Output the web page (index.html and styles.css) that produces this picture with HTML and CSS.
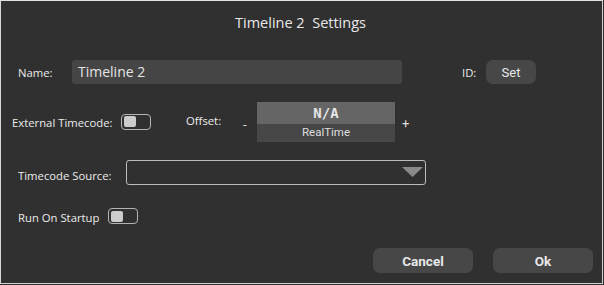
FILE: index.html
```html
<!DOCTYPE html>
<html>
<head>
<meta charset="utf-8">
<link rel="stylesheet" href="styles.css">
</head>
<body>
<div class="dialog">
  <div class="title">Timeline 2&nbsp;&nbsp;Settings</div>

  <div class="row row-name">
    <span class="label lbl-name">Name:</span>
    <div class="text-input">Timeline 2</div>
    <span class="label lbl-id">ID:</span>
    <button class="btn btn-set">Set</button>
  </div>

  <div class="row row-ext">
    <span class="label lbl-ext">External Timecode:</span>
    <span class="toggle toggle-ext"><span class="knob"></span></span>
    <span class="label lbl-offset">Offset:</span>
    <span class="pm minus">-</span>
    <div class="offset-box">
      <div class="offset-top">N/A</div>
      <div class="offset-bottom">RealTime</div>
    </div>
    <span class="pm plus">+</span>
  </div>

  <div class="row row-src">
    <span class="label lbl-src">Timecode Source:</span>
    <div class="dropdown">
      <svg class="caret" width="21" height="10" viewBox="0 0 21 10"><polygon points="0,0 21,0 10.5,10" fill="#8a8a8a"/></svg>
    </div>
  </div>

  <div class="row row-run">
    <span class="label lbl-run">Run On Startup</span>
    <span class="toggle toggle-run"><span class="knob"></span></span>
  </div>

  <div class="row row-buttons">
    <button class="btn btn-big">Cancel</button>
    <button class="btn btn-big">Ok</button>
  </div>
</div>
</body>
</html>
```

FILE: styles.css
```css
html, body {
  margin: 0;
  padding: 0;
  background: #303030;
}

.dialog {
  box-sizing: border-box;
  width: 603px;
  height: 284px;
  border: 1px solid #cfcfcf;
  border-top-color: #e0e0e0;
  border-left-color: #d6d6d6;
  background: #303030;
  font-family: "Open Sans", "Noto Sans", sans-serif;
  color: #e6e6e6;
}

.title {
  height: 43px;
  line-height: 43px;
  text-align: center;
  font-size: 14.5px;
  color: #e8e8e8;
  padding-right: 2px;
}

.row {
  display: flex;
  align-items: center;
}

.label {
  font-size: 11.3px;
  color: #ececec;
  white-space: nowrap;
}

/* Row 1 */
.row-name {
  margin-top: 16px;
  height: 24px;
}
.lbl-name { margin-left: 17px; width: 54px; }
.text-input {
  box-sizing: border-box;
  width: 330px;
  height: 24px;
  background: #454545;
  border-radius: 3px;
  padding-left: 6px;
  font-size: 14px;
  line-height: 24px;
  color: #e4e4e4;
}
.lbl-id { margin-left: 60px; width: 24px; }

.btn {
  border: none;
  background: #474747;
  color: #e8e8e8;
  font-family: Roboto, "Liberation Sans", sans-serif;
  border-radius: 7px;
  padding: 0;
  cursor: default;
}
.btn-set {
  width: 50px;
  height: 24px;
  font-size: 13px;
}

/* Row 2 */
.row-ext {
  margin-top: 18px;
  height: 40px;
}
.lbl-ext { margin-left: 11px; width: 109px; }
.toggle {
  box-sizing: border-box;
  display: flex;
  align-items: center;
  border: 1px solid #b4b4b4;
  border-radius: 4px;
  padding: 0 2px;
}
.knob {
  width: 12px;
  height: 11px;
  background: #cccccc;
  border-radius: 2px;
}
.toggle-ext { width: 30px; height: 16px; margin-top: -1px; }
.lbl-offset { margin-left: 35px; width: 57px; margin-top: -4px; }
.pm {
  font-family: Roboto, sans-serif;
  font-size: 13px;
  color: #dcdcdc;
}
.minus { width: 14px; margin-top: 4px; }
.plus { margin-left: 7px; margin-top: 2px; }
.offset-box {
  width: 138px;
  height: 40px;
  display: flex;
  flex-direction: column;
}
.offset-top {
  height: 22px;
  background: #656565;
  text-align: center;
  font-family: "DejaVu Sans Mono", "Liberation Mono", monospace;
  font-weight: bold;
  font-size: 14px;
  line-height: 22px;
  color: #e6e6e6;
}
.offset-bottom {
  height: 18px;
  background: #474747;
  text-align: center;
  font-family: Roboto, sans-serif;
  font-size: 11.5px;
  line-height: 17px;
  color: #dedede;
}

/* Row 3 */
.row-src {
  margin-top: 18px;
  height: 24px;
}
.lbl-src { margin-left: 17px; width: 108px; margin-top: 7px; }
.dropdown {
  box-sizing: border-box;
  width: 300px;
  height: 25px;
  border: 1px solid #bdbdbd;
  border-radius: 3px;
  display: flex;
  justify-content: flex-end;
  align-items: center;
  padding-right: 2px;
}

/* Row 4 */
.row-run {
  margin-top: 24px;
  height: 16px;
}
.lbl-run { margin-left: 17px; width: 90px; margin-top: 3px; }
.toggle-run { width: 30px; height: 16px; }

/* Buttons */
.row-buttons {
  margin-top: 24px;
  justify-content: flex-end;
  gap: 20px;
  padding-right: 9px;
}
.btn-big {
  width: 100px;
  height: 25px;
  font-size: 13.5px;
  font-weight: bold;
}
```
